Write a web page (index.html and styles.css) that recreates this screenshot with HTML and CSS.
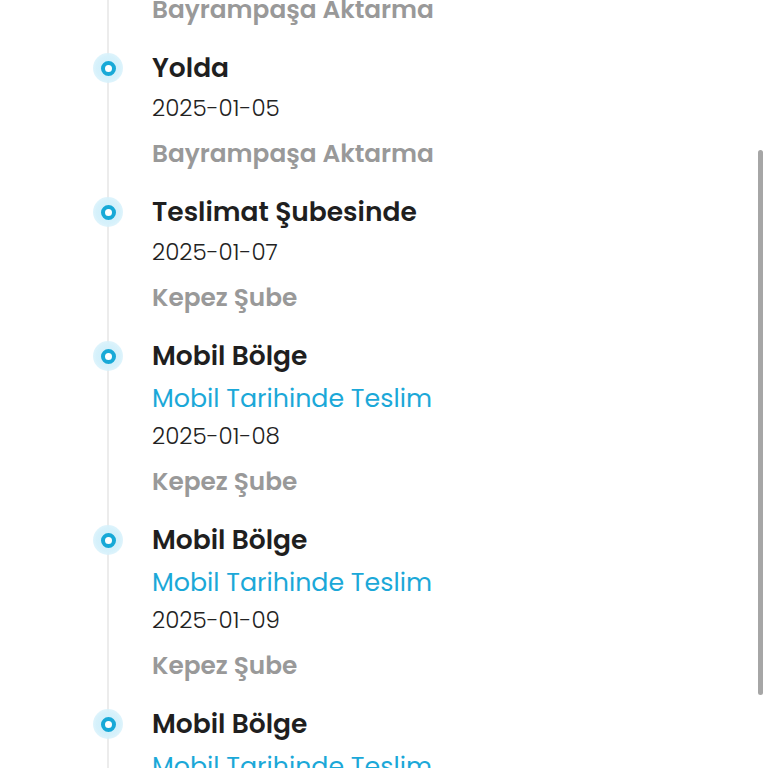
FILE: index.html
```html
<!DOCTYPE html>
<html lang="tr">
<head>
<meta charset="utf-8">
<title>Kargo Takip</title>
<link rel="stylesheet" href="styles.css">
</head>
<body>
<main class="timeline">
  <div class="event event-partial">
    <div class="event-body">
      <div class="location">Bayrampaşa Aktarma</div>
    </div>
  </div>
  <div class="event">
    <span class="marker"></span>
    <div class="event-body">
      <div class="title">Yolda</div>
      <div class="date">2025-01-05</div>
      <div class="location">Bayrampaşa Aktarma</div>
    </div>
  </div>
  <div class="event">
    <span class="marker"></span>
    <div class="event-body">
      <div class="title">Teslimat Şubesinde</div>
      <div class="date">2025-01-07</div>
      <div class="location">Kepez Şube</div>
    </div>
  </div>
  <div class="event">
    <span class="marker"></span>
    <div class="event-body">
      <div class="title">Mobil Bölge</div>
      <div class="note">Mobil Tarihinde Teslim</div>
      <div class="date">2025-01-08</div>
      <div class="location">Kepez Şube</div>
    </div>
  </div>
  <div class="event">
    <span class="marker"></span>
    <div class="event-body">
      <div class="title">Mobil Bölge</div>
      <div class="note">Mobil Tarihinde Teslim</div>
      <div class="date">2025-01-09</div>
      <div class="location">Kepez Şube</div>
    </div>
  </div>
  <div class="event">
    <span class="marker"></span>
    <div class="event-body">
      <div class="title">Mobil Bölge</div>
      <div class="note">Mobil Tarihinde Teslim</div>
      <div class="date">2025-01-10</div>
      <div class="location">Kepez Şube</div>
    </div>
  </div>
</main>
<div class="scroll-thumb"></div>
</body>
</html>
```

FILE: styles.css
```css
html, body {
  margin: 0;
  padding: 0;
  background: #ffffff;
  overflow: hidden;
  height: 768px;
}

body {
  font-family: Poppins, Inter, "Noto Sans", sans-serif;
  color: #222222;
}

.timeline {
  position: relative;
  margin-top: -17px;
  padding-left: 152px;
  display: flex;
  flex-direction: column;
  gap: 10px;
}

.timeline::before {
  content: "";
  position: absolute;
  left: 107px;
  top: 0;
  bottom: -200px;
  width: 2px;
  background: #ececec;
}

.event {
  position: relative;
}

.marker {
  position: absolute;
  left: -59px;
  top: 6px;
  width: 30px;
  height: 30px;
  border-radius: 50%;
  background: radial-gradient(circle, #cdeefa 0, #d6f1fb 55%, rgba(214, 241, 251, 0.4) 100%);
  display: flex;
  align-items: center;
  justify-content: center;
}

.marker::after {
  content: "";
  width: 7px;
  height: 7px;
  border-radius: 50%;
  background: #ffffff;
  border: 4px solid #18a9d7;
}

.event-body {
  display: flex;
  flex-direction: column;
}

.title {
  padding-top: 1px;
  font-size: 26.5px;
  font-weight: 600;
  line-height: 39px;
  color: #1f1f1f;
  white-space: nowrap;
}

.note {
  margin-top: 4px;
  font-size: 25.3px;
  font-weight: 400;
  line-height: 38px;
  color: #1ba8d8;
  white-space: nowrap;
}

.date {
  margin-top: 2px;
  font-size: 23px;
  font-weight: 300;
  line-height: 38px;
  color: #222222;
}

.note + .date {
  margin-top: 0;
}

.location {
  font-size: 24.8px;
  font-weight: 600;
  line-height: 54px;
  color: #999999;
  white-space: nowrap;
}

.scroll-thumb {
  position: fixed;
  right: 5px;
  top: 150px;
  width: 5px;
  height: 545px;
  border-radius: 3px;
  background: #a6a6a6;
}
```
